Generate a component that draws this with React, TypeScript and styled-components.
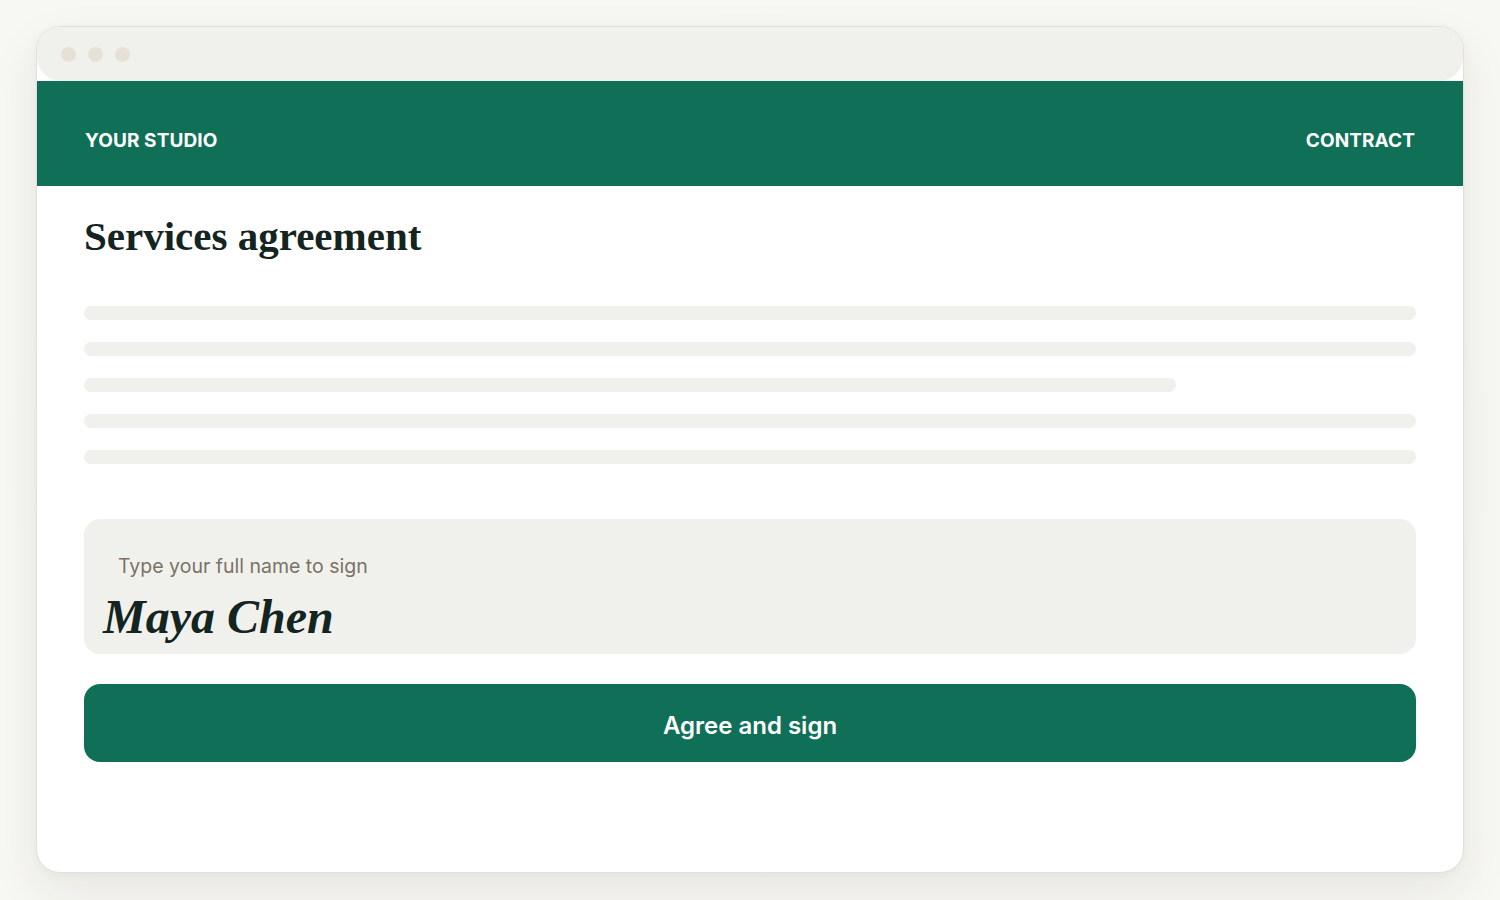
import React from 'react';
import styled, { createGlobalStyle } from 'styled-components';

const GlobalStyle = createGlobalStyle`
  html, body {
    margin: 0;
    padding: 0;
    background: #f7f7f3;
  }
  * {
    box-sizing: border-box;
  }
`;

const Page = styled.div`
  width: 1500px;
  height: 900px;
  padding: 26px 36px;
  background: radial-gradient(ellipse at center, #f1f1ec 0%, #f7f7f3 70%);
`;

const Window = styled.div`
  height: 847px;
  background: #ffffff;
  border: 1px solid #e5e0d5;
  border-radius: 24px;
  overflow: hidden;
  box-shadow: 0 20px 50px rgba(60, 55, 40, 0.08), 0 2px 8px rgba(60, 55, 40, 0.04);
  display: flex;
  flex-direction: column;
`;

const TitleBar = styled.div`
  height: 54px;
  flex-shrink: 0;
  background: #f0f1ec;
  border-radius: 0 0 24px 24px;
  display: flex;
  align-items: center;
  gap: 12px;
  padding-left: 24px;
`;

const Dot = styled.span`
  width: 15px;
  height: 15px;
  border-radius: 50%;
  background: #e6e1d7;
`;

const Header = styled.header`
  height: 105px;
  flex-shrink: 0;
  background: #106f57;
  color: #ffffff;
  display: flex;
  align-items: center;
  justify-content: space-between;
  padding: 13px 48px 0;
  font-family: Inter, "Liberation Sans", sans-serif;
  font-weight: 700;
  font-size: 19px;
  letter-spacing: 0.1px;
`;

const Content = styled.main`
  padding: 26px 47px 0;
  display: flex;
  flex-direction: column;
`;

const Title = styled.h1`
  margin: 0;
  font-family: "Liberation Serif", "Times New Roman", serif;
  font-weight: 700;
  font-size: 41px;
  line-height: 48px;
  color: #142420;
`;

const Lines = styled.div`
  margin-top: 46px;
  display: flex;
  flex-direction: column;
  gap: 22px;
`;

const Line = styled.div<{ $width?: string }>`
  width: ${p => p.$width ?? '100%'};
  height: 14px;
  border-radius: 7px;
  background: #f0f1ec;
`;

const SignBox = styled.div`
  margin-top: 55px;
  height: 135px;
  border-radius: 16px;
  background: #f0f1ec;
  padding: 34px 19px 0;
  display: flex;
  flex-direction: column;
`;

const SignLabel = styled.label`
  padding-left: 15px;
  font-family: Inter, "Liberation Sans", sans-serif;
  font-size: 19.5px;
  line-height: 26px;
  color: #7b7265;
`;

const SignName = styled.div`
  margin-top: 10px;
  font-family: "Liberation Serif", "Times New Roman", serif;
  font-style: italic;
  font-weight: 700;
  font-size: 48px;
  line-height: 56px;
  color: #142420;
`;

const SignButton = styled.button`
  margin-top: 30px;
  height: 78px;
  padding: 4px 0 0;
  border: none;
  border-radius: 16px;
  background: #106f57;
  color: #ffffff;
  font-family: Inter, "Liberation Sans", sans-serif;
  font-weight: 600;
  font-size: 24px;
  cursor: pointer;
`;

const App: React.FC = () => {
  return (
    <>
      <GlobalStyle />
      <Page>
        <Window>
          <TitleBar>
            <Dot />
            <Dot />
            <Dot />
          </TitleBar>
          <Header>
            <span>YOUR STUDIO</span>
            <span>CONTRACT</span>
          </Header>
          <Content>
            <Title>Services agreement</Title>
            <Lines>
              <Line />
              <Line />
              <Line $width="82%" />
              <Line />
              <Line />
            </Lines>
            <SignBox>
              <SignLabel>Type your full name to sign</SignLabel>
              <SignName>Maya Chen</SignName>
            </SignBox>
            <SignButton>Agree and sign</SignButton>
          </Content>
        </Window>
      </Page>
    </>
  );
};

export default App;
